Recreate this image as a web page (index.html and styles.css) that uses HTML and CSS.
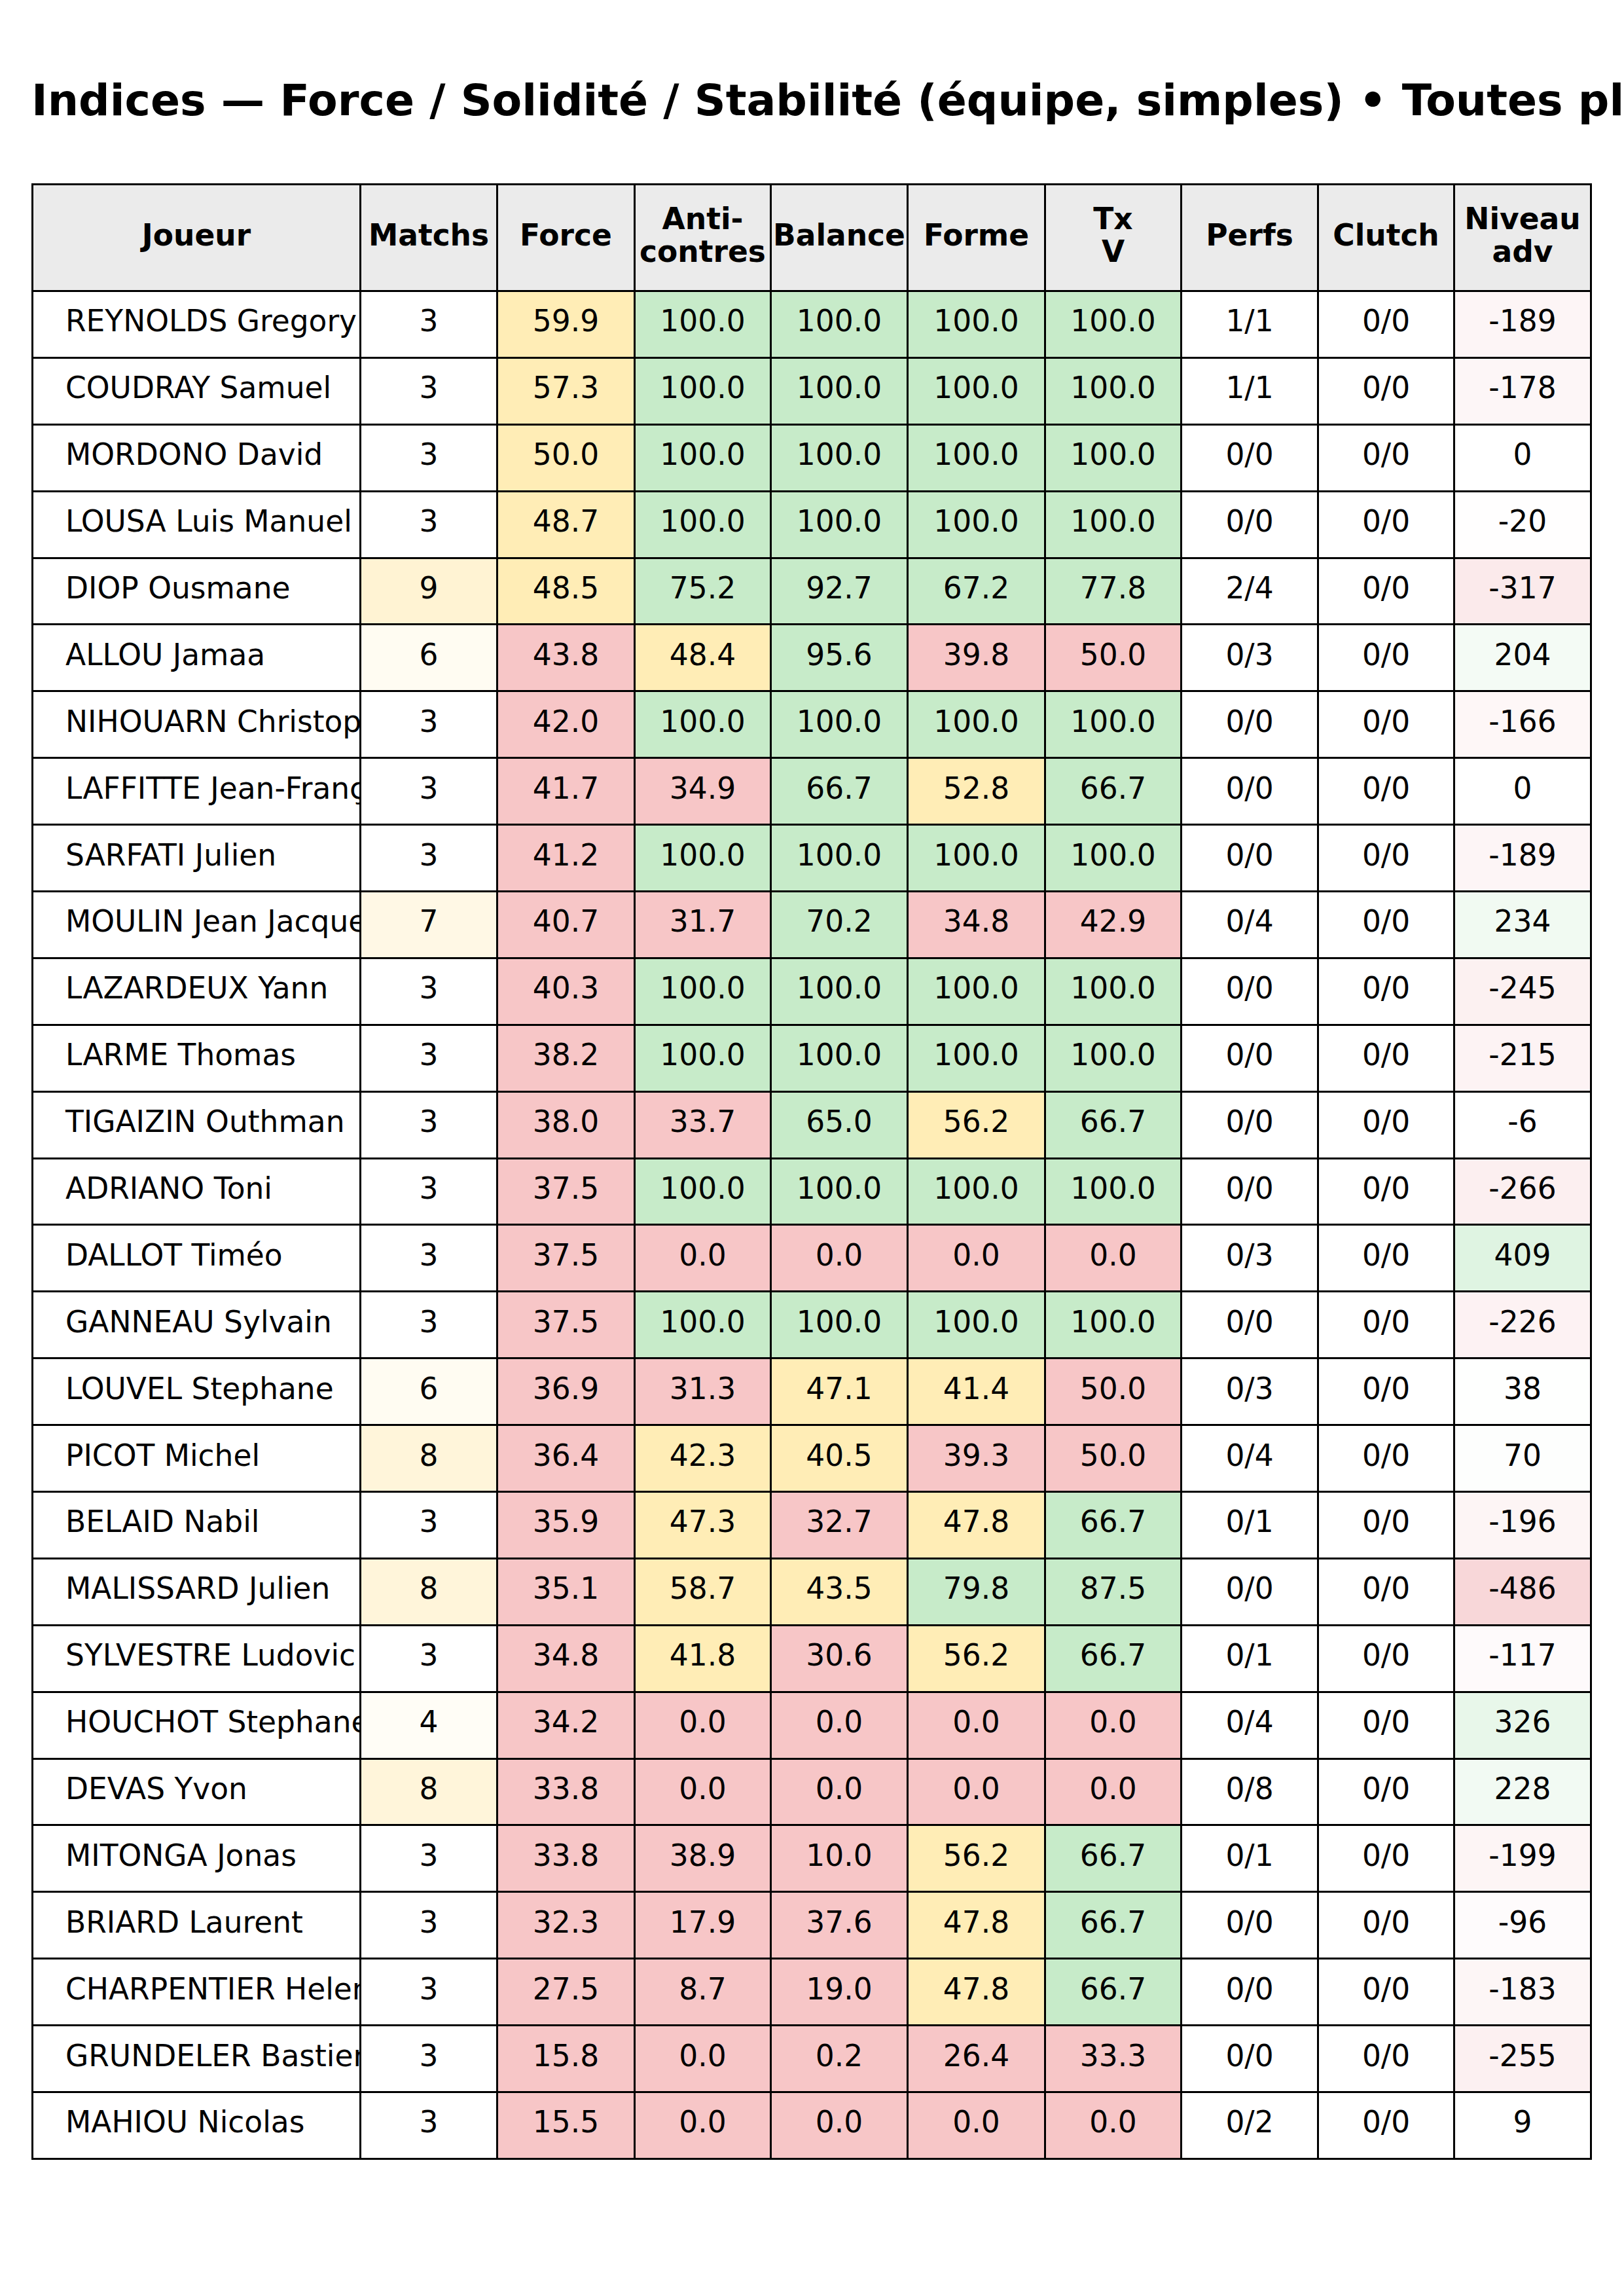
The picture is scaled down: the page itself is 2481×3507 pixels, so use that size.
FILE: index.html
```html
<!DOCTYPE html>
<html lang="fr">
<head>
<meta charset="utf-8">
<title>Indices</title>
<link rel="stylesheet" href="styles.css">
</head>
<body>
<div class="page">
<h1 class="title">Indices — Force / Solidité / Stabilité (équipe, simples) • Toutes plages</h1>
<table class="grid">
<colgroup>
<col class="c-name"><col class="c9"><col class="c10"><col class="c8"><col class="c9"><col class="c10"><col class="c8"><col class="c9"><col class="c8"><col class="c9">
</colgroup>
<thead>
<tr><th>Joueur</th><th>Matchs</th><th>Force</th><th>Anti-<br>contres</th><th>Balance</th><th>Forme</th><th>Tx<br>V</th><th>Perfs</th><th>Clutch</th><th>Niveau<br>adv</th></tr>
</thead>
<tbody>
<tr><td class="name">REYNOLDS Gregory</td><td>3</td><td class="y">59.9</td><td class="g">100.0</td><td class="g">100.0</td><td class="g">100.0</td><td class="g">100.0</td><td>1/1</td><td>0/0</td><td style="background:#fdf5f6">-189</td></tr>
<tr><td class="name">COUDRAY Samuel</td><td>3</td><td class="y">57.3</td><td class="g">100.0</td><td class="g">100.0</td><td class="g">100.0</td><td class="g">100.0</td><td>1/1</td><td>0/0</td><td style="background:#fdf6f7">-178</td></tr>
<tr><td class="name">MORDONO David</td><td>3</td><td class="y">50.0</td><td class="g">100.0</td><td class="g">100.0</td><td class="g">100.0</td><td class="g">100.0</td><td>0/0</td><td>0/0</td><td>0</td></tr>
<tr><td class="name">LOUSA Luis Manuel</td><td>3</td><td class="y">48.7</td><td class="g">100.0</td><td class="g">100.0</td><td class="g">100.0</td><td class="g">100.0</td><td>0/0</td><td>0/0</td><td style="background:#fffefe">-20</td></tr>
<tr><td class="name">DIOP Ousmane</td><td style="background:#fff3d3">9</td><td class="y">48.5</td><td class="g">75.2</td><td class="g">92.7</td><td class="g">67.2</td><td class="g">77.8</td><td>2/4</td><td>0/0</td><td style="background:#fbeaeb">-317</td></tr>
<tr><td class="name">ALLOU Jamaa</td><td style="background:#fffcf2">6</td><td class="r">43.8</td><td class="y">48.4</td><td class="g">95.6</td><td class="r">39.8</td><td class="r">50.0</td><td>0/3</td><td>0/0</td><td style="background:#f4fbf5">204</td></tr>
<tr><td class="name">NIHOUARN Christophe</td><td>3</td><td class="r">42.0</td><td class="g">100.0</td><td class="g">100.0</td><td class="g">100.0</td><td class="g">100.0</td><td>0/0</td><td>0/0</td><td style="background:#fef7f7">-166</td></tr>
<tr><td class="name">LAFFITTE Jean-François</td><td>3</td><td class="r">41.7</td><td class="r">34.9</td><td class="g">66.7</td><td class="y">52.8</td><td class="g">66.7</td><td>0/0</td><td>0/0</td><td>0</td></tr>
<tr><td class="name">SARFATI Julien</td><td>3</td><td class="r">41.2</td><td class="g">100.0</td><td class="g">100.0</td><td class="g">100.0</td><td class="g">100.0</td><td>0/0</td><td>0/0</td><td style="background:#fdf5f6">-189</td></tr>
<tr><td class="name">MOULIN Jean Jacques</td><td style="background:#fff8e5">7</td><td class="r">40.7</td><td class="r">31.7</td><td class="g">70.2</td><td class="r">34.8</td><td class="r">42.9</td><td>0/4</td><td>0/0</td><td style="background:#f1faf2">234</td></tr>
<tr><td class="name">LAZARDEUX Yann</td><td>3</td><td class="r">40.3</td><td class="g">100.0</td><td class="g">100.0</td><td class="g">100.0</td><td class="g">100.0</td><td>0/0</td><td>0/0</td><td style="background:#fcf1f1">-245</td></tr>
<tr><td class="name">LARME Thomas</td><td>3</td><td class="r">38.2</td><td class="g">100.0</td><td class="g">100.0</td><td class="g">100.0</td><td class="g">100.0</td><td>0/0</td><td>0/0</td><td style="background:#fdf3f4">-215</td></tr>
<tr><td class="name">TIGAIZIN Outhman</td><td>3</td><td class="r">38.0</td><td class="r">33.7</td><td class="g">65.0</td><td class="y">56.2</td><td class="g">66.7</td><td>0/0</td><td>0/0</td><td>-6</td></tr>
<tr><td class="name">ADRIANO Toni</td><td>3</td><td class="r">37.5</td><td class="g">100.0</td><td class="g">100.0</td><td class="g">100.0</td><td class="g">100.0</td><td>0/0</td><td>0/0</td><td style="background:#fceff0">-266</td></tr>
<tr><td class="name">DALLOT Timéo</td><td>3</td><td class="r">37.5</td><td class="r">0.0</td><td class="r">0.0</td><td class="r">0.0</td><td class="r">0.0</td><td>0/3</td><td>0/0</td><td style="background:#dff4e2">409</td></tr>
<tr><td class="name">GANNEAU Sylvain</td><td>3</td><td class="r">37.5</td><td class="g">100.0</td><td class="g">100.0</td><td class="g">100.0</td><td class="g">100.0</td><td>0/0</td><td>0/0</td><td style="background:#fdf2f3">-226</td></tr>
<tr><td class="name">LOUVEL Stephane</td><td style="background:#fffcf2">6</td><td class="r">36.9</td><td class="r">31.3</td><td class="y">47.1</td><td class="y">41.4</td><td class="r">50.0</td><td>0/3</td><td>0/0</td><td style="background:#fefffe">38</td></tr>
<tr><td class="name">PICOT Michel</td><td style="background:#fff5da">8</td><td class="r">36.4</td><td class="y">42.3</td><td class="y">40.5</td><td class="r">39.3</td><td class="r">50.0</td><td>0/4</td><td>0/0</td><td style="background:#fdfefd">70</td></tr>
<tr><td class="name">BELAID Nabil</td><td>3</td><td class="r">35.9</td><td class="y">47.3</td><td class="r">32.7</td><td class="y">47.8</td><td class="g">66.7</td><td>0/1</td><td>0/0</td><td style="background:#fdf5f5">-196</td></tr>
<tr><td class="name">MALISSARD Julien</td><td style="background:#fff5da">8</td><td class="r">35.1</td><td class="y">58.7</td><td class="y">43.5</td><td class="g">79.8</td><td class="g">87.5</td><td>0/0</td><td>0/0</td><td style="background:#f8d7d9">-486</td></tr>
<tr><td class="name">SYLVESTRE Ludovic</td><td>3</td><td class="r">34.8</td><td class="y">41.8</td><td class="r">30.6</td><td class="y">56.2</td><td class="g">66.7</td><td>0/1</td><td>0/0</td><td style="background:#fefafb">-117</td></tr>
<tr><td class="name">HOUCHOT Stephane</td><td style="background:#fffdf6">4</td><td class="r">34.2</td><td class="r">0.0</td><td class="r">0.0</td><td class="r">0.0</td><td class="r">0.0</td><td>0/4</td><td>0/0</td><td style="background:#e8f7ea">326</td></tr>
<tr><td class="name">DEVAS Yvon</td><td style="background:#fff5da">8</td><td class="r">33.8</td><td class="r">0.0</td><td class="r">0.0</td><td class="r">0.0</td><td class="r">0.0</td><td>0/8</td><td>0/0</td><td style="background:#f2faf3">228</td></tr>
<tr><td class="name">MITONGA Jonas</td><td>3</td><td class="r">33.8</td><td class="r">38.9</td><td class="r">10.0</td><td class="y">56.2</td><td class="g">66.7</td><td>0/1</td><td>0/0</td><td style="background:#fdf5f5">-199</td></tr>
<tr><td class="name">BRIARD Laurent</td><td>3</td><td class="r">32.3</td><td class="r">17.9</td><td class="r">37.6</td><td class="y">47.8</td><td class="g">66.7</td><td>0/0</td><td>0/0</td><td style="background:#fefbfc">-96</td></tr>
<tr><td class="name">CHARPENTIER Helene</td><td>3</td><td class="r">27.5</td><td class="r">8.7</td><td class="r">19.0</td><td class="y">47.8</td><td class="g">66.7</td><td>0/0</td><td>0/0</td><td style="background:#fdf6f6">-183</td></tr>
<tr><td class="name">GRUNDELER Bastien</td><td>3</td><td class="r">15.8</td><td class="r">0.0</td><td class="r">0.2</td><td class="r">26.4</td><td class="r">33.3</td><td>0/0</td><td>0/0</td><td style="background:#fcf0f1">-255</td></tr>
<tr><td class="name">MAHIOU Nicolas</td><td>3</td><td class="r">15.5</td><td class="r">0.0</td><td class="r">0.0</td><td class="r">0.0</td><td class="r">0.0</td><td>0/2</td><td>0/0</td><td>9</td></tr>
</tbody>
</table>
</div>
</body>
</html>
```
FILE: styles.css
```css
html, body {
  margin: 0;
  padding: 0;
  background: #ffffff;
}
body {
  width: 2481px;
  height: 3507px;
  overflow: hidden;
  font-family: "DejaVu Sans", "Noto Sans", sans-serif;
  color: #000;
}
.page {
  padding: 120px 0 0 48px;
}
.title {
  margin: 0 0 93px 0;
  font-size: 66.5px;
  line-height: 67px;
  font-weight: bold;
  white-space: nowrap;
}
.grid {
  border-collapse: collapse;
  table-layout: fixed;
  width: 2384px;
}
.c-name { width: 501px; }
.c8 { width: 208px; }
.c9 { width: 209px; }
.c10 { width: 210px; }
.grid th,
.grid td {
  border: 3px solid #000;
  padding: 0;
  overflow: hidden;
  white-space: nowrap;
  text-align: center;
  vertical-align: middle;
  font-size: 45.5px;
  line-height: 52px;
}
.grid th {
  background: #ebebeb;
  font-weight: bold;
  line-height: 50px;
  padding-bottom: 6px;
}
.grid thead tr { height: 163px; }
.grid tbody tr { height: 101.9px; }
.grid td { padding-bottom: 8px; }
.grid td.name {
  text-align: left;
  padding-left: 49px;
}
.y { background: #ffedb6; }
.g { background: #c7ebc9; }
.r { background: #f7c6c7; }
```
